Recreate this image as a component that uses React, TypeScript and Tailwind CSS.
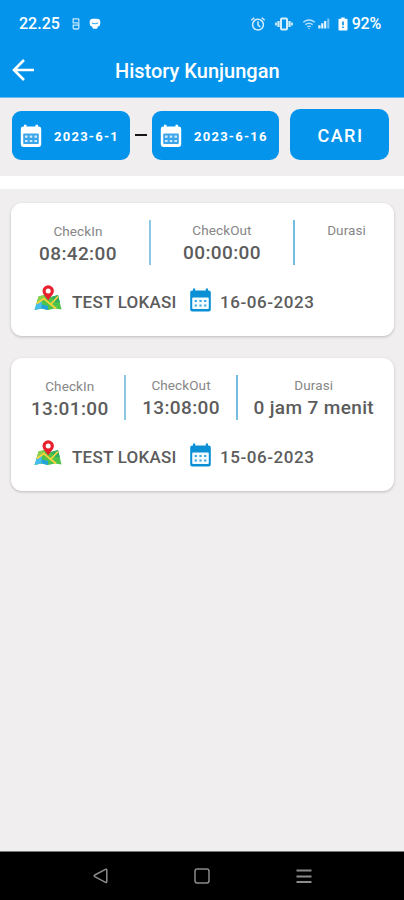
import type { ReactNode } from 'react'

type Visit = {
  checkIn: string
  checkOut: string
  duration: string
  location: string
  date: string
}

const visits: Visit[] = [
  { checkIn: '08:42:00', checkOut: '00:00:00', duration: '', location: 'TEST LOKASI', date: '16-06-2023' },
  { checkIn: '13:01:00', checkOut: '13:08:00', duration: '0 jam 7 menit', location: 'TEST LOKASI', date: '15-06-2023' },
]

const CalendarIcon = () => (
  <svg viewBox="0 0 22 24" className="ml-[11px] h-6 w-[23px] shrink-0">
    <path
      fill="#0b90d6"
      d="M3.500.5h2.200v2h10.600v-2h2.200v2h.8a2 2 0 0 1 2 2v17a2 2 0 0 1-2 2H2.700a2 2 0 0 1-2-2v-17a2 2 0 0 1 2-2h.8z"
    />
    <rect x="2.700" y="9.400" width="16.600" height="11.600" rx="1" fill="#f3fbff" />
    <path
      fill="#3ba6de"
      d="M5.200 12h2.200v1.900H5.200zM9.900 12h2.200v1.900H9.900zM14.600 12h2.200v1.900h-2.200zM5.200 16.500h2.200v1.900H5.200zM9.900 16.500h2.200v1.900H9.900zM14.600 16.500h2.200v1.900h-2.200z"
    />
  </svg>
)

// Header variant: solid body with a grid cut into it
const CalendarSolidIcon = () => (
  <svg viewBox="0 0 22 24" className="h-6 w-[22px] shrink-0">
    <path
      fill="#fff"
      d="M4 .8h2.500v1.800h9V.8H18v1.800h.8A2.400 2.400 0 0 1 21.200 5v15.600a2.400 2.400 0 0 1-2.400 2.400H3.200A2.400 2.400 0 0 1 .8 20.600V5a2.400 2.400 0 0 1 2.400-2.400H4z"
    />
    <rect x="3.200" y="9.600" width="15.600" height="10.400" rx="1" fill="#3ba5ea" />
    <path
      fill="#cdeafc"
      d="M5 11.600h2.600v2.100H5zM9.700 11.600h2.600v2.100H9.700zM14.400 11.600H17v2.100h-2.600zM5 15.900h2.600V18H5zM9.700 15.900h2.600V18H9.700zM14.400 15.900H17V18h-2.600z"
    />
  </svg>
)

const MapIcon = () => (
  <svg viewBox="0 0 28 26" className="h-[26px] w-7 shrink-0">
    <path d="M4.500 11.500 10 10l7 2 7-2 3.500 14.500-6.500-1-7 1.500-6.500-1.500L.5 25z" fill="#4fc44a" />
    <path d="M4.500 11.500 10 10l1 3-6.500 5.500-1.800-.5z" fill="#8bd04a" />
    <path d="M2.700 18.500 8 15.500l-.5 8L.5 25z" fill="#45bdf0" />
    <path d="M8 19.500l6 1.500v4l-6.500-1.500z" fill="#23a2dc" />
    <path d="M17 12l7-2 2 7.500-5-.5z" fill="#2fae63" />
    <path d="M3 18.500 10 13.500l5 4.500 7 5.500M17 19l7-7.500" stroke="#ffd23c" strokeWidth="1.700" fill="none" />
    <path d="M14.200 15.500C12.500 12 8.500 9.800 8.500 6a5.700 5.700 0 0 1 11.400 0c0 3.800-4 6-5.700 9.500z" fill="#e8202e" />
    <circle cx="14.200" cy="6" r="2.500" fill="#fff" />
  </svg>
)

const StatusBar = () => (
  <div className="flex h-[46px] items-center pt-px pl-[19px] pr-[23px] text-white">
    <span className="text-[16px] font-medium leading-5">22.25</span>
    <svg viewBox="0 0 8 12" className="ml-[12px] h-3 w-2" fill="none" stroke="#c5e6fb" strokeWidth="1.300">
      <path d="M6.800.8H1.200v4h5.600v3M6.800.8v3M1.200 7.200h5.600v2.600q0 1.200-1.200 1.200H2.400q-1.200 0-1.200-1.200z" />
    </svg>
    <svg viewBox="0 0 12 12" className="ml-[9px] h-3 w-3">
      <path d="M4 .8h4q3.300 0 3.300 3.200v1.500q0 2.500-2.300 3l-1 2.300H4L3 8.500Q.7 8 .7 5.500V4Q.7.800 4 .8z" fill="#fff" />
      <path d="M3 5q3 1.500 6 0" stroke="#3aa9ec" strokeWidth="1.200" fill="none" />
    </svg>

    <svg viewBox="0 0 16 16" className="ml-auto h-4 w-4" fill="none" stroke="#d5edfc" strokeWidth="1.500">
      <circle cx="8" cy="8.700" r="5.400" />
      <path d="M8 5.300v3.700l2.300 1.800M1.300 4.300 4.300 1.700M14.700 4.300l-3-2.600" />
    </svg>
    <svg viewBox="0 0 18 14" className="ml-[9px] h-[14px] w-[18px]" fill="none" stroke="#d5edfc">
      <rect x="6" y="1.500" width="6" height="11" rx="1" strokeWidth="2" />
      <path d="M3.500 4v6M14.500 4v6" strokeWidth="2.200" />
      <path d="M1 5.500v3M17 5.500v3" strokeWidth="1.800" />
    </svg>
    <svg viewBox="0 0 14 12" className="ml-[9px] h-3 w-[14px]" fill="none" stroke="#b9e1fb" strokeWidth="1.400">
      <path d="M1.200 4.200q5.800-4.500 11.600 0M3.300 6.600q3.700-2.800 7.400 0M5.200 8.800q1.800-1.300 3.600 0" />
      <path d="M6 10l1 1.300L8 10z" fill="#d5edfc" stroke="none" />
    </svg>
    <svg viewBox="0 0 12 11" className="ml-[2px] h-[11px] w-3" fill="#e4f4fe">
      <path d="M.3 7.300h2.200V10.500H.3zM3.200 5.300h2.200v5.200H3.200zM6.100 3h2.200v7.500H6.100z" />
      <path d="M9.300.5h2v10h-2z" fill="#7fc8f6" />
    </svg>
    <svg viewBox="0 0 10 14" className="ml-[8px] h-[14px] w-[10px]">
      <path d="M3.300.5h3.400v1.300h2q.8 0 .8.8v10q0 .9-.9.900H1.400q-.9 0-.9-.9v-10q0-.8.800-.8h2z" fill="#fff" />
      <path d="M5 4.500v3.700M5 9.500v1.400" stroke="#1b98ea" strokeWidth="1.800" />
    </svg>
    <span className="ml-[4px] text-[16px] font-medium leading-5 tracking-[-0.200px]">92%</span>
  </div>
)

const DateButton = ({ className, children }: { className: string; children: ReactNode }) => (
  <button className={`flex h-[49px] items-center rounded-[9px] bg-[#0594eb] pl-2 text-white ${className}`}>
    <CalendarSolidIcon />
    <span className="ml-3 mt-[3px] text-[13px] font-bold leading-4 tracking-[1.250px]">{children}</span>
  </button>
)

const Column = ({ label, value }: { label: string; value: string }) => (
  <div className="flex flex-col items-center">
    <span className="text-[13.500px] leading-[18px] tracking-[0.100px] text-[#868686]">{label}</span>
    <span className="mt-[2px] h-6 whitespace-nowrap text-[19px] font-medium leading-6 tracking-[0.370px] text-[#5c5c5c]">
      {value}
    </span>
  </div>
)

const VisitCard = ({ visit }: { visit: Visit }) => (
  <div className="h-[133px] rounded-[11px] bg-white px-3 pt-[17px] shadow-[0_1px_3px_rgba(0,0,0,0.220)]">
    <div className="flex h-[45px] items-start justify-around">
      <div className="pt-[2px]">
        <Column label="CheckIn" value={visit.checkIn} />
      </div>
      <div className="h-[45px] w-[2px] bg-[#8cc8e2]" />
      <div className="pt-px">
        <Column label="CheckOut" value={visit.checkOut} />
      </div>
      <div className="h-[45px] w-[2px] bg-[#74bde0]" />
      <div className="pt-px">
        <Column label="Durasi" value={visit.duration} />
      </div>
    </div>
    <div className="mt-[19px] flex h-8 items-center pl-[11px] text-[17px] font-medium leading-6 text-[#5c5c5c]">
      <div className="-mt-[5px]">
        <MapIcon />
      </div>
      <span className="ml-[10px] mt-[3px] w-[106px] whitespace-nowrap tracking-[0.250px]">{visit.location}</span>
      <CalendarIcon />
      <span className="ml-[8px] mt-[3px] tracking-[0.550px]">{visit.date}</span>
    </div>
  </div>
)

export default function App() {
  return (
    <div className="flex h-[900px] w-[404px] flex-col overflow-hidden bg-[#f0eeef] font-['Roboto',sans-serif]">
      <header className="h-[98px] shrink-0 border-b border-[#69bdf2] bg-[#0594eb]">
        <StatusBar />
        <div className="flex h-12 items-center pl-3 text-white">
          <svg viewBox="0 0 24 24" className="h-6 w-6" fill="none" stroke="#fff" strokeWidth="2.600">
            <path d="M22 12H2.500M12 2 2 12l10 10" />
          </svg>
          <h1 className="ml-[79px] mt-px text-[20px] font-medium leading-6">History Kunjungan</h1>
        </div>
      </header>

      <section className="flex h-[78px] shrink-0 items-start pl-3 pt-[13px]">
        <DateButton className="w-[118px]">2023-6-1</DateButton>
        <div className="mx-[5px] mt-[23px] h-[2px] w-3 bg-[#151515]" />
        <DateButton className="w-[127px]">2023-6-16</DateButton>
        <button className="-mt-[2px] ml-[11px] h-[51px] w-[99px] rounded-[10px] bg-[#0594eb] pl-[2px] pt-px text-[18px] font-medium tracking-[1.500px] text-white">
          CARI
        </button>
      </section>

      <div className="h-[13px] shrink-0 bg-white" />

      <main className="flex flex-1 flex-col gap-[22px] pl-[11px] pr-[10px] pt-[14px]">
        {visits.map((visit) => (
          <VisitCard key={visit.date} visit={visit} />
        ))}
      </main>

      <nav className="flex h-[49px] shrink-0 items-center justify-center gap-[86px] border-t border-[#777] bg-black">
        <svg viewBox="0 0 16 16" className="h-4 w-4" fill="none" stroke="#8b8b8b" strokeWidth="1.500">
          <path d="M13.500 1.300 2.800 7q-1.300.8 0 1.600l10.700 5.700q1.300.5 1.300-.9V2.200q0-1.400-1.300-.9z" />
        </svg>
        <svg viewBox="0 0 16 16" className="h-4 w-4" fill="none" stroke="#8b8b8b" strokeWidth="1.500">
          <rect x="1" y="1" width="14" height="14" rx="2.200" />
        </svg>
        <svg viewBox="0 0 16 16" className="h-4 w-4" stroke="#8b8b8b" strokeWidth="1.800">
          <path d="M.5 2.500h15M.5 8.500h15M.5 14h15" />
        </svg>
      </nav>
    </div>
  )
}
